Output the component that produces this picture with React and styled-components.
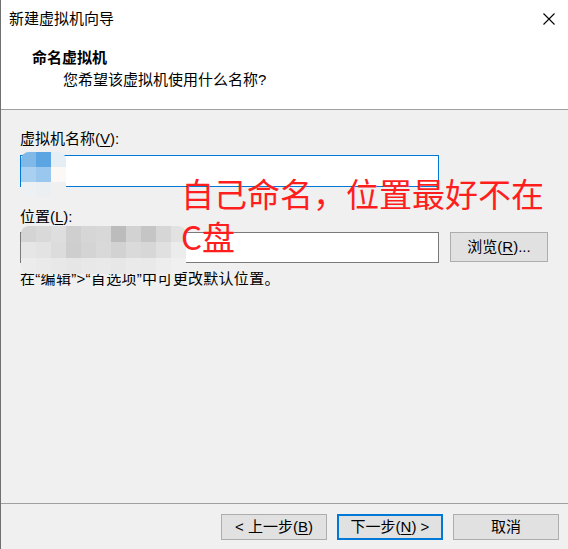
import React from "react";
import styled, { createGlobalStyle } from "styled-components";

const GlobalStyle = createGlobalStyle`
  html, body {
    margin: 0;
    padding: 0;
    background: #f0f0f0;
  }
  * {
    box-sizing: border-box;
  }
`;

const FONT = `"Liberation Sans", "Noto Sans CJK SC", sans-serif`;

const Window = styled.div`
  width: 568px;
  height: 549px;
  display: flex;
  flex-direction: column;
  background: #f0f0f0;
  border-left: 1px solid #707070;
  font-family: ${FONT};
  font-size: 15px;
  color: #000;
  overflow: hidden;
`;

const TitleBar = styled.div`
  height: 42px;
  display: flex;
  align-items: center;
  justify-content: space-between;
  padding: 0 13px 4px 8px;
  background: #fff;
`;

const TitleText = styled.span`
  line-height: 20px;
`;

const Header = styled.div`
  height: 68px;
  background: #fff;
  border-bottom: 1px solid #a0a0a0;
  padding: 6px 0 0 31px;
`;

const HeaderTitle = styled.div`
  font-weight: bold;
  line-height: 20px;
`;

const HeaderSub = styled.div`
  line-height: 20px;
  margin-top: 2px;
  padding-left: 31px;
`;

const Body = styled.div`
  position: relative;
  flex: 1;
  padding: 19px 20px 0 19px;
  display: grid;
  grid-template-columns: 1fr 98px;
  column-gap: 11px;
  align-content: start;
`;

const Label = styled.div`
  grid-column: 1 / -1;
  justify-self: start;
  line-height: 20px;
  margin-top: ${(p) => p.$top || 0}px;
  margin-bottom: ${(p) => p.$bottom || 0}px;
`;

const Key = styled.span`
  text-decoration: underline;
  text-underline-offset: 2px;
`;

const TextBox = styled.div`
  height: ${(p) => p.$h}px;
  background: #fff;
  border: 1px solid ${(p) => (p.$focused ? "#0078d7" : "#7a7a7a")};
`;

const Button = styled.div`
  height: ${(p) => p.$h || 26}px;
  width: ${(p) => p.$w || 106}px;
  display: flex;
  align-items: center;
  justify-content: center;
  background: #e1e1e1;
  border: ${(p) => (p.$default ? "2px solid #0078d7" : "1px solid #adadad")};
  line-height: 20px;
  white-space: pre;
`;

const Hint = styled.div`
  grid-column: 1 / -1;
  justify-self: start;
  line-height: 20px;
  margin-top: 6px;
  letter-spacing: 0.3px;
`;

const Note = styled.div`
  position: absolute;
  left: 180px;
  top: 62px;
  font-family: "Noto Sans CJK SC", sans-serif;
  font-size: 33px;
  line-height: 43px;
  color: #ff1e1e;
`;

const Mosaic = styled.div`
  position: absolute;
  left: ${(p) => p.$x}px;
  top: ${(p) => p.$y}px;
  display: grid;
  grid-template-columns: repeat(${(p) => p.$cols}, 15px);
  grid-auto-rows: ${(p) => p.$row}px;
  filter: blur(0.6px);
  border-radius: 8px;
  overflow: hidden;
`;

const Tile = styled.div`
  background: ${(p) => p.$c};
`;

const Footer = styled.div`
  height: 46px;
  border-top: 1px solid #a0a0a0;
  display: flex;
  justify-content: flex-end;
  align-items: flex-start;
  gap: 10px;
  padding: 10px 9px 0 0;
`;

const nameTiles = [
  "#80b9e8", "#5ba6e2", "#e6eef5",
  "#a9d0f1", "#9ac7ee", "#fbf8f6",
  "#eef1f4", "#eceff2", "#f0f0f0",
];

const pathTiles = [
  "#d4d4d4", "#d9d9d9", "#dedede", "#cfcfcf", "#d6d6d6", "#d8d8d8", "#bcbcbc", "#d2d2d2", "#c5c5c5", "#d6d6d6", "#e2e2e2",
  "#e6e6e6", "#e3e3e3", "#dcdcdc", "#cecece", "#d4d4d4", "#d9d9d9", "#d2d2d2", "#dadada", "#d7d7d7", "#e0e0e0", "#ececec",
  "#ececec", "#eaeaea", "#e8e8e8", "#e6e6e6", "#e8e8e8", "#e9e9e9", "#e7e7e7", "#eaeaea", "#e9e9e9", "#ededed", "#f0f0f0",
];

const CloseIcon = () => (
  <svg width="12" height="12" viewBox="0 0 12 12">
    <path d="M0.5 0.5 L11.5 11.5 M11.5 0.5 L0.5 11.5" stroke="#000" strokeWidth="1.1" fill="none" />
  </svg>
);

export default function App() {
  return (
    <>
      <GlobalStyle />
      <Window>
        <TitleBar>
          <TitleText>新建虚拟机向导</TitleText>
          <CloseIcon />
        </TitleBar>
        <Header>
          <HeaderTitle>命名虚拟机</HeaderTitle>
          <HeaderSub>您希望该虚拟机使用什么名称?</HeaderSub>
        </Header>
        <Body>
          <Label $bottom={6}>
            虚拟机名称(<Key>V</Key>):
          </Label>
          <TextBox $h={32} $focused />
          <div />
          <Label $top={20} $bottom={5}>
            位置(<Key>L</Key>):
          </Label>
          <TextBox $h={31} />
          <Button $w={98} $h={30}>
            浏览(<Key>R</Key>)...
          </Button>
          <Hint>在“编辑”&gt;“首选项”中可更改默认位置。</Hint>

          <Mosaic $x={20} $y={42} $cols={3} $row={15}>
            {nameTiles.map((c, i) => (
              <Tile key={i} $c={c} />
            ))}
          </Mosaic>
          <Mosaic $x={20} $y={116} $cols={11} $row={16}>
            {pathTiles.map((c, i) => (
              <Tile key={i} $c={c} />
            ))}
          </Mosaic>

          <Note>
            自己命名，位置最好不在
            <br />
            C盘
          </Note>
        </Body>
        <Footer>
          <Button>
            {"< 上一步("}<Key>B</Key>)
          </Button>
          <Button $default>
            下一步(<Key>N</Key>){" >"}
          </Button>
          <Button>取消</Button>
        </Footer>
      </Window>
    </>
  );
}
